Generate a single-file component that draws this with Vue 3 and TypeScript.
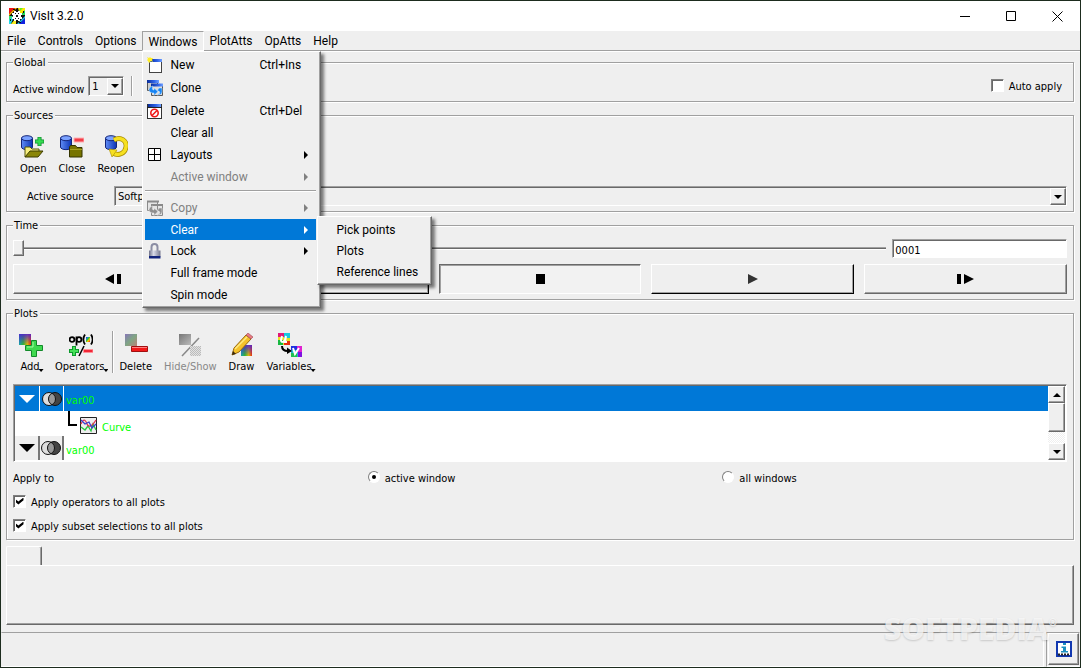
<script setup lang="ts">
import { ref } from 'vue'

const activeWindow = ref('1')
const source = ref('softp')
const frame = ref('0001')
const time = ref(0)
const autoApply = ref(false)
const applyTo = ref<'active' | 'all'>('active')
const operatorsToAll = ref(true)
const subsetsToAll = ref(true)
</script>

<template>
  <div class="window">
    <svg class="defs" aria-hidden="true">
      <defs>
        <linearGradient id="rain" x1="0" y1="0" x2="1" y2="1">
          <stop offset="0" stop-color="#3a10e0" />
          <stop offset=".25" stop-color="#1c8ccf" />
          <stop offset=".45" stop-color="#2fc52a" />
          <stop offset=".65" stop-color="#f0d000" />
          <stop offset="1" stop-color="#f01808" />
        </linearGradient>
        <linearGradient id="hue" x1="0" y1="0" x2="1" y2="0">
          <stop offset="0" stop-color="#10a8b0" />
          <stop offset=".35" stop-color="#30b830" />
          <stop offset=".7" stop-color="#e0c000" />
          <stop offset="1" stop-color="#f02808" />
        </linearGradient>
        <linearGradient id="shade" x1="0" y1="0" x2="0" y2="1">
          <stop offset="0" stop-color="#5020d0" stop-opacity=".9" />
          <stop offset="1" stop-color="#5020d0" stop-opacity="0" />
        </linearGradient>
        <linearGradient id="dull" x1="0" y1="0" x2="1" y2="1">
          <stop offset="0" stop-color="#8876b8" />
          <stop offset=".5" stop-color="#7fa584" />
          <stop offset="1" stop-color="#b98276" />
        </linearGradient>
        <linearGradient id="gray" x1="0" y1="0" x2="1" y2="1">
          <stop offset="0" stop-color="#777" />
          <stop offset="1" stop-color="#bbb" />
        </linearGradient>
        <linearGradient id="drum" x1="0" y1="0" x2="1" y2="0">
          <stop offset="0" stop-color="#5f8cf5" />
          <stop offset="1" stop-color="#0c33b4" />
        </linearGradient>
        <linearGradient id="bar" x1="0" y1="0" x2="1" y2="0">
          <stop offset="0" stop-color="#0a2e9a" />
          <stop offset=".6" stop-color="#2d62e8" />
          <stop offset="1" stop-color="#6fa0ff" />
        </linearGradient>
        <linearGradient id="steel" x1="0" y1="0" x2="1" y2="0">
          <stop offset="0" stop-color="#6d7088" />
          <stop offset=".4" stop-color="#d8dae8" />
          <stop offset="1" stop-color="#74778e" />
        </linearGradient>
      </defs>
    </svg>

    <header class="titlebar">
      <svg class="logo" width="16" height="16" viewBox="0 0 16 16" aria-hidden="true">
        <rect width="16" height="16" fill="#111" />
        <path d="M0 0h6L0 6z" fill="#f01010" /><path d="M6 0h2L0 8V6z" fill="#ffb000" />
        <path d="M9 0h7v3L11 7z" fill="#ffe800" /><path d="M16 2v5h-4z" fill="#20e060" /><path d="M11 0h3l-4 4z" fill="#60f020" />
        <path d="M0 10l5-2-3 8H0z" fill="#20d8e8" /><path d="M2 16l5-6v6z" fill="#f8f020" /><path d="M0 8h4l-4 4z" fill="#30e070" />
        <path d="M10 16l6-6v6z" fill="#1020e0" /><path d="M8 16l8-8v2l-6 6z" fill="#20c0f0" />
        <path d="M5 3h2v1h2V3h2v2h2v2h-1v2h1v2h-2v2H9v-1H7v1H5v-2H3V9h1V7H3V5h2z" fill="#fff" />
        <path d="M6 5h1v1H6zM9 5h1v1H9zM6 10h1v1H6zM9 10h1v1H9zM7 7h2v2H7zM4 1h2v1H4zM10 14h2v1h-2zM14 3h1v2h-1zM1 11h1v2H1z" fill="#111" />
      </svg>
      <h1>VisIt 3.2.0</h1>
      <div class="caption">
        <button aria-label="Minimize"><svg width="11" height="11" viewBox="0 0 11 11"><path d="M0 5.5h10" /></svg></button>
        <button aria-label="Maximize"><svg width="11" height="11" viewBox="0 0 11 11"><path d="M.5.5h9v9h-9z" /></svg></button>
        <button aria-label="Close window"><svg width="11" height="11" viewBox="0 0 11 11"><path d="M.5.5l10 10M10.500.5l-10 10" /></svg></button>
      </div>
    </header>

    <nav class="menubar">
      <button>File</button>
      <button>Controls</button>
      <button>Options</button>
      <div class="menu-host">
        <button class="open" aria-haspopup="menu" aria-expanded="true">Windows</button>
        <div class="menu main-menu" role="menu">
          <button class="item tall" role="menuitem">
            <svg width="16" height="16" viewBox="0 0 16 16"><rect x="2.500" y="3.500" width="12" height="12" fill="#fff" stroke="#444" /><rect x="3" y="2" width="12" height="3" fill="url(#bar)" /><path d="M0 0l2 1 1-1 1 1 2 0-1 2 1 2-2-1-2 2-1-2-1-1 1-1z" fill="#ffee20" /></svg>
            <span>New</span><kbd>Ctrl+Ins</kbd>
          </button>
          <button class="item tall" role="menuitem">
            <svg width="16" height="16" viewBox="0 0 16 16"><path d="M.5 1.500h10v9H.5z" fill="#ccc" stroke="#555" /><path d="M0 0h12v3H0z" fill="url(#bar)" /><path d="M4.500 5.500h11v10h-11z" fill="#ddd" stroke="#555" /><path d="M4 3.500h12v3H4z" fill="url(#bar)" /><path d="M6 6c-4 1-5 4-3 6 1 1 3 1 4 1v2.500l4-4-4-3.500v2c-2 0-2-2-1-4zM15 8v4c0 2-2 3-5 3l3-2-1-2h-2l2-3z" fill="#1684f4" stroke="#cfe6ff" stroke-width=".5" /></svg>
            <span>Clone</span>
          </button>
          <button class="item tall" role="menuitem">
            <svg width="16" height="16" viewBox="0 0 16 16"><rect x=".5" y="1.500" width="14" height="14" fill="#fff" stroke="#333" /><rect x="1" y="1" width="13" height="3" fill="url(#bar)" /><path d="M0 4.500h15" stroke="#222" /><circle cx="7.500" cy="10" r="3.700" fill="none" stroke="#f01818" stroke-width="1.600" /><path d="M5 12.500l5-5" stroke="#f01818" stroke-width="1.600" /></svg>
            <span>Delete</span><kbd>Ctrl+Del</kbd>
          </button>
          <button class="item" role="menuitem"><span>Clear all</span></button>
          <button class="item" role="menuitem">
            <svg width="16" height="16" viewBox="0 0 16 16"><path d="M1.500 1.500h12v12h-12zM7.500 1v13M1 7.500h13" fill="#fff" stroke="#000" /></svg>
            <span>Layouts</span><i class="arrow"></i>
          </button>
          <button class="item" role="menuitem" disabled><span>Active window</span><i class="arrow"></i></button>
          <hr>
          <button class="item" role="menuitem" disabled>
            <svg width="16" height="16" viewBox="0 0 16 16"><path d="M.5 1.500h10v9H.5zM4.500 5.500h11v10h-11z" fill="#e4e4e4" stroke="#8a8a8a" /><path d="M0 1.500h12M4 5h12" stroke="#8a8a8a" stroke-width="2" /><path d="M6 6c-4 1-5 4-3 6 1 1 3 1 4 1v2.500l4-4-4-3.500v2c-2 0-2-2-1-4zM15 8v4c0 2-2 3-5 3l3-2-1-2h-2l2-3z" fill="#8f8f8f" stroke="#eee" stroke-width=".5" /></svg>
            <span>Copy</span><i class="arrow"></i>
          </button>
          <div class="menu-host">
            <button class="item current" role="menuitem" aria-haspopup="menu" aria-expanded="true"><span>Clear</span><i class="arrow"></i></button>
            <div class="menu sub-menu" role="menu">
              <button class="item" role="menuitem"><span>Pick points</span></button>
              <button class="item" role="menuitem"><span>Plots</span></button>
              <button class="item" role="menuitem"><span>Reference lines</span></button>
            </div>
          </div>
          <button class="item" role="menuitem">
            <svg width="16" height="16" viewBox="0 0 16 16"><path d="M4.500 9V4c0-4 6-4 6 0v5" fill="none" stroke="#8b8da3" stroke-width="2" /><path d="M2 7.500h11.500v6H2z" fill="url(#steel)" /><path d="M2 13h11.500v2.500H2z" fill="#12247c" /></svg>
            <span>Lock</span><i class="arrow"></i>
          </button>
          <button class="item" role="menuitem"><span>Full frame mode</span></button>
          <button class="item" role="menuitem"><span>Spin mode</span></button>
        </div>
      </div>
      <button>PlotAtts</button>
      <button>OpAtts</button>
      <button>Help</button>
    </nav>

    <main>
      <fieldset>
        <legend>Global</legend>
        <div class="global-row">
          <label class="low" for="aw">Active window</label>
          <div class="combo small">
            <select id="aw" v-model="activeWindow"><option>1</option></select>
            <span class="drop" aria-hidden="true"></span>
          </div>
          <span class="vline"></span>
          <label class="check auto"><input v-model="autoApply" type="checkbox"><span>Auto apply</span></label>
        </div>
      </fieldset>

      <fieldset>
        <legend>Sources</legend>
        <div class="toolbar sources">
          <button>
            <svg width="24" height="24" viewBox="0 0 24 24"><path d="M.5 3v9c0 3.500 11 3.500 11 0V3z" fill="url(#drum)" stroke="#14267a" /><ellipse cx="6" cy="3.200" rx="5.500" ry="2.500" fill="#7ba2ff" stroke="#14267a" /><path d="M4 22V12h5l2 2h7v3" fill="#f8f080" stroke="#55550a" /><path d="M4 22l5-6h13l-5 6z" fill="#8a8608" stroke="#3c3c00" /><path d="M18.500 2v9M14 6.500h9" stroke="#0c8a2c" stroke-width="4" /><path d="M18.500 2.500v8M14.500 6.500h8" stroke="#35dc50" stroke-width="2.500" /></svg>
            <span>Open</span>
          </button>
          <button>
            <svg width="24" height="24" viewBox="0 0 24 24"><path d="M.5 3v9c0 3.500 11 3.500 11 0V3z" fill="url(#drum)" stroke="#14267a" /><ellipse cx="6" cy="3.200" rx="5.500" ry="2.500" fill="#7ba2ff" stroke="#14267a" /><path d="M9.500 22V12l1-1.500h5l1.500 2h5V22z" fill="#777400" stroke="#353500" /><path d="M10 14.500h12" stroke="#a5a120" /><path d="M14 3h10v4H14z" fill="#f23e48" stroke="#ffb0b4" /></svg>
            <span>Close</span>
          </button>
          <button>
            <svg width="24" height="24" viewBox="0 0 24 24"><path d="M1.500 3v9c0 3.500 11 3.500 11 0V3z" fill="url(#drum)" stroke="#14267a" /><ellipse cx="7" cy="3.200" rx="5.500" ry="2.500" fill="#7ba2ff" stroke="#14267a" /><path d="M10 5c7-4 13 1 12 7-1 7-8 9-13 6" fill="none" stroke="#a88c00" stroke-width="5" /><path d="M10 5c7-4 13 1 12 7-1 7-8 9-13 6" fill="none" stroke="#f6e020" stroke-width="3.500" /><path d="M5 14l8 1-5 7z" fill="#f6e020" stroke="#a88c00" stroke-width=".6" /></svg>
            <span>Reopen</span>
          </button>
        </div>
        <div class="source-row">
          <label for="src">Active source</label>
          <div class="combo">
            <select id="src" v-model="source"><option value="softp">Softp</option></select>
            <span class="drop" aria-hidden="true"></span>
          </div>
        </div>
      </fieldset>

      <fieldset>
        <legend>Time</legend>
        <div class="time-row">
          <input v-model="time" class="slider" type="range" min="0" max="100" aria-label="Time slider">
          <input v-model="frame" class="field" type="text" aria-label="Time state">
        </div>
        <div class="player">
          <button aria-label="Step back"><svg width="18" height="10" viewBox="0 0 18 10"><path d="M9 0v10L0 5zM12 0h4v10h-4z" /></svg></button>
          <button class="strong" aria-label="Play reverse"><svg width="18" height="10" viewBox="0 0 18 10"><path d="M14 0v10L4 5z" /></svg></button>
          <button class="down" aria-label="Stop"><svg width="18" height="10" viewBox="0 0 18 10"><path d="M5 0h9v10H5z" /></svg></button>
          <button class="strong" aria-label="Play"><svg width="18" height="10" viewBox="0 0 18 10"><path d="M4 0v10l10-5z" fill="#333" /></svg></button>
          <button aria-label="Step forward"><svg width="18" height="10" viewBox="0 0 18 10"><path d="M7 0v10l10-5zM0 0h4v10H0z" /></svg></button>
        </div>
      </fieldset>

      <fieldset>
        <legend>Plots</legend>
        <div class="toolbar">
          <button>
            <svg width="24" height="24" viewBox="0 0 24 24"><path d="M0 1h12v11H0z" fill="url(#hue)" /><path d="M0 1h12v11H0z" fill="url(#shade)" /><path d="M12.500 7.500h5v5h6v5h-6v6h-5v-6h-6v-5h6z" fill="#3fd94f" stroke="#128a2a" /><path d="M14 9v5H8" fill="none" stroke="#a0ffa0" /></svg>
            <span>Add<i class="tick"></i></span>
          </button>
          <button>
            <svg width="24" height="24" viewBox="0 0 24 24"><g fill="none" stroke="#000" stroke-width="1.800"><circle cx="3" cy="6.500" r="2.400" /><path d="M7.500 3.500v9" /><circle cx="10" cy="6.500" r="2.400" /><path d="M16 1.500c-2 3-2 7 0 10M22 1.500c2 3 2 7 0 10" /></g><path d="M17 4h4v5h-4z" fill="url(#rain)" /><path d="M5 13v10M0 18h10" stroke="#0c9a2c" stroke-width="4" /><path d="M5 14v8M1 18h8" stroke="#46e058" stroke-width="2" /><path d="M10 23l5-10" stroke="#000" stroke-width="1.600" /><path d="M14.500 16.500H24v3h-9.500z" fill="#f02838" stroke="#ff9098" /></svg>
            <span>Operators<i class="tick"></i></span>
          </button>
          <span class="vline"></span>
          <button>
            <svg width="24" height="24" viewBox="0 0 24 24"><path d="M1 1h12v12H1z" fill="url(#dull)" /><path d="M7.500 13.500h16v5h-16z" fill="#f31818" stroke="#a01010" /><path d="M8 14.500h15" stroke="#ff8080" /></svg>
            <span>Delete</span>
          </button>
          <button disabled>
            <svg width="24" height="24" viewBox="0 0 24 24"><path d="M1 1h12v11H1z" fill="url(#gray)" /><path d="M4 23L21 5" stroke="#888" stroke-width="1.500" /><path d="M12 13h11v10H12z" fill="#e2e2e2" /><path d="M12 13.500h11M12 15.500h11M12 17.500h11M12 19.500h11M12 21.500h11" stroke="#bbb" stroke-dasharray="1 1" /><path d="M13 14.500h10M13 16.500h10M13 18.500h10M13 20.500h10M13 22.500h10" stroke="#bbb" stroke-dasharray="1 1" /></svg>
            <span>Hide/Show</span>
          </button>
          <button>
            <svg width="24" height="24" viewBox="0 0 24 24"><path d="M11 12h11v11H11z" fill="url(#hue)" /><path d="M11 12h11v11H11z" fill="url(#shade)" /><path d="M2 22l2-7L16 2l5 4L9 19z" fill="#f5c22a" stroke="#9a6a10" /><path d="M5 16L17 4" stroke="#ffe980" stroke-width="1.500" /><path d="M16 2l2-2 5 4-2 2z" fill="#e87a84" stroke="#a04850" stroke-width=".6" /><path d="M2 22l1-4 3 3z" fill="#3a2a10" /></svg>
            <span>Draw</span>
          </button>
          <button>
            <svg width="24" height="24" viewBox="0 0 24 24"><path d="M0 0h12v12H0z" fill="#e8e020" /><path d="M0 0h6v4H0z" fill="#e01878" /><path d="M6 0h6v5H6z" fill="#18c8e0" /><path d="M0 7h5v5H0z" fill="#18b840" /><path d="M6 8h6v4H6z" fill="#e83010" /><path d="M4 3L3 7c0 3 3 2 4 0l1-4M8 3L7 9h2" fill="none" stroke="#fff" stroke-width="2" /><path d="M13 13h11v11H13z" fill="#20b8d0" /><path d="M13 13h6v4h-6z" fill="#2030e0" /><path d="M19 13h5v6h-5z" fill="#e020d0" /><path d="M13 20h6v4h-6z" fill="#20c050" /><path d="M20 19h4v5h-4z" fill="#8010e0" /><path d="M15 15l2 6 4-6" fill="none" stroke="#fff" stroke-width="2" /><path d="M4 13c0 4 3 5 6 5" fill="none" stroke="#000" stroke-width="2" /><path d="M9 14.500l5 3.500-5 3z" /></svg>
            <span>Variables<i class="tick"></i></span>
          </button>
        </div>

        <div class="plot-list">
          <ul>
            <li class="selected">
              <button class="cell" aria-label="Collapse plot"><i class="fold"></i></button>
              <span class="cell"><svg width="20" height="16" viewBox="0 0 20 16"><circle cx="7" cy="8" r="6.500" fill="#ddd" /><circle cx="13" cy="8" r="6.500" fill="#444" /><path d="M10 2.200a6.500 6.500 0 0 1 0 11.600a6.500 6.500 0 0 1 0-11.600z" fill="#999" /><g fill="none" stroke="#111"><circle cx="7" cy="8" r="6.500" /><circle cx="13" cy="8" r="6.500" /></g></svg></span>
              <span class="name">var00</span>
            </li>
            <li class="child">
              <i class="elbow"></i>
              <svg width="17" height="17" viewBox="0 0 17 17"><path d="M.5.5h16v16H.5z" fill="#eee" stroke="#222" /><g fill="none" stroke-width="1.300"><path d="M1 10l4 3 3-4 3 5 2-7 3 6" stroke="#28c840" /><path d="M1 7c3-7 5-3 6 0s4 4 9-4" stroke="#e03050" /><path d="M1 3l4 4 4-2 3 6 4-4" stroke="#3840d0" /></g></svg>
              <span class="name">Curve</span>
            </li>
            <li>
              <button class="cell" aria-label="Collapse plot"><i class="fold"></i></button>
              <span class="cell"><svg width="20" height="16" viewBox="0 0 20 16"><circle cx="7" cy="8" r="6.500" fill="#ddd" /><circle cx="13" cy="8" r="6.500" fill="#444" /><path d="M10 2.200a6.500 6.500 0 0 1 0 11.600a6.500 6.500 0 0 1 0-11.600z" fill="#999" /><g fill="none" stroke="#111"><circle cx="7" cy="8" r="6.500" /><circle cx="13" cy="8" r="6.500" /></g></svg></span>
              <span class="name">var00</span>
            </li>
          </ul>
          <div class="scroll">
            <button aria-label="Scroll up"><i class="up"></i></button>
            <span class="thumb"></span>
            <span class="track"></span>
            <button aria-label="Scroll down"><i class="dn"></i></button>
          </div>
        </div>

        <div class="apply-row" role="radiogroup" aria-labelledby="apply-to">
          <span id="apply-to">Apply to</span>
          <label class="check"><input v-model="applyTo" type="radio" name="apply" value="active"><span>active window</span></label>
          <label class="check"><input v-model="applyTo" type="radio" name="apply" value="all"><span>all windows</span></label>
        </div>
        <label class="check line"><input v-model="operatorsToAll" type="checkbox"><span>Apply operators to all plots</span></label>
        <label class="check line"><input v-model="subsetsToAll" type="checkbox"><span>Apply subset selections to all plots</span></label>
      </fieldset>

      <section class="tabs">
        <button class="tab" role="tab" aria-label="Notepad tab"></button>
        <div class="panel"></div>
      </section>
    </main>

    <footer>
      <div class="status"></div>
      <div class="output">
        <button aria-label="Output window">
          <svg width="16" height="16" viewBox="0 0 16 16"><path d="M1 1h14v14H1z" fill="#fff" stroke="#1238b0" stroke-width="2" /><path d="M7 2h3v2H7zM5.500 5.500H10V10h2v1.500H5V10h2V7H5.500z" fill="#1b8fc0" /><path d="M2 13.500h12" stroke="#222" stroke-width="2" stroke-dasharray="2 1" /></svg>
        </button>
      </div>
      <div class="watermark">SOFTPEDIA<sup>®</sup></div>
    </footer>
  </div>
</template>

<style>
html, body { margin: 0; background: #efefef; }
</style>

<style scoped>
* { box-sizing: border-box; }
.window {
  position: relative;
  min-height: 100vh;
  display: flex;
  flex-direction: column;
  border: 1px solid #1d2c1e;
  background: #efefef;
  color: #000;
  font: 11px/13px "DejaVu Sans Condensed", "Liberation Sans", sans-serif;
  overflow: hidden;
}
.defs { position: absolute; width: 0; height: 0; }
button, input, select { font: inherit; color: inherit; margin: 0; }
button { padding: 0; border: 0; background: none; }
svg { display: block; flex: none; }

.titlebar { display: flex; align-items: center; height: 30px; padding-left: 8px; background: #fff; }
.titlebar h1 { flex: 1; margin: 0 0 0 5px; font: 400 12px/16px Roboto, "Liberation Sans", sans-serif; }
.caption { display: flex; align-self: stretch; }
.caption button { display: grid; place-items: center; width: 46px; }
.caption path { fill: none; stroke: #000; }

.menubar {
  display: flex;
  height: 21px;
  border-bottom: 1px solid #fff;
  box-shadow: inset 0 -1px #a0a0a0;
  font: 12px/18px Roboto, "Liberation Sans", sans-serif;
}
.menubar > button, .open { height: 20px; padding: 0 6px; }
.menu-host { position: relative; z-index: 2; }
.open { display: block; padding: 1px 5px 0; border: 1px solid; border-color: #a0a0a0 #fff #fff #a0a0a0; }
.menu {
  position: absolute;
  display: flex;
  flex-direction: column;
  background: #efefef;
  border: 1px solid;
  border-color: #fff #696969 #696969 #fff;
  box-shadow: inset -1px -1px #a0a0a0, 3px 3px 3px rgba(0, 0, 0, .5);
}
.main-menu { top: 20px; left: 0; width: 179px; padding: 1px 4px 1px 2px; }
.item {
  display: grid;
  grid-template-columns: 16px 1fr auto;
  column-gap: 7px;
  align-items: center;
  width: 100%;
  height: 22px;
  padding: 0 8px 0 2px;
  text-align: left;
}
.item.tall { height: 23px; padding-right: 13px; }
.item > svg { grid-column: 1; }
.item > span { grid-column: 2; white-space: nowrap; }
.item kbd { width: 44px; font: inherit; }
.item:disabled { color: #808080; }
.item.current { background: #0078d7; color: #fff; height: 21px; }
.arrow { border: solid transparent; border-width: 4px 0 4px 4px; border-left-color: currentColor; }
.menu hr { width: 100%; height: 2px; margin: 2px 0 5px; border: 0; border-top: 1px solid #a0a0a0; border-bottom: 1px solid #fff; }
.sub-menu { top: -3px; left: 172px; width: 115px; padding: 2px 1px; }
.sub-menu .item { grid-template-columns: 1fr; height: 21px; padding: 0 0 0 17px; }
.sub-menu .item > span { grid-column: 1; }

main { flex: 1; display: flex; flex-direction: column; padding: 4px 6px 7px 5px; gap: 6px; }
fieldset {
  min-width: 0;
  margin: 0;
  padding: 0 6px 5px;
  border: 1px solid #a0a0a0;
  box-shadow: inset 1px 1px #fff, 1px 1px #fff;
}
fieldset + fieldset { margin-top: 1px; }
legend { height: 13px; padding: 0 2px 0 1px; background: #efefef; }
.vline { width: 2px; border-left: 1px solid #a0a0a0; border-right: 1px solid #fff; }

.global-row { display: flex; align-items: center; height: 27px; padding-top: 6px; }
.global-row .low { padding-top: 8px; }
.global-row .combo { margin-left: 4px; }
.global-row .vline { height: 20px; margin-left: 7px; }
.global-row .auto { margin-left: auto; margin-right: 5px; padding-top: 2px; }

.combo {
  display: grid;
  height: 20px;
  border: 1px solid;
  border-color: #a0a0a0 #fff #fff #a0a0a0;
  box-shadow: inset 1px 1px #696969;
}
.combo.small { width: 36px; }
.combo select, .combo .drop { grid-area: 1 / 1; }
.combo select { appearance: none; width: 100%; padding: 1px 18px 0 3px; border: 0; border-radius: 0; background: none; outline: 0; }
.drop {
  justify-self: end;
  display: grid;
  place-items: center;
  width: 16px;
  margin: 1px 0 0;
  background: #efefef;
  border: 1px solid;
  border-color: #fff #696969 #696969 #fff;
  box-shadow: inset -1px -1px #a0a0a0;
  pointer-events: none;
}
.drop::after, .dn, .fold { content: ""; border: solid transparent; border-width: 4px 4px 0; border-top-color: #000; }
.up { border: solid transparent; border-width: 0 4px 4px; border-bottom-color: #000; }

.toolbar { display: flex; padding: 13px 0 11px; }
.toolbar.sources { padding-left: 1px; }
.toolbar button { display: flex; flex-direction: column; align-items: center; gap: 3px; padding: 0 6px; }
.toolbar button > span { display: flex; align-items: flex-end; }
.toolbar button:disabled { color: #888; }
.toolbar .vline { margin: -2px -1px 0 0; }
.tick { width: 5px; height: 3px; margin: 0 -2px 1px -1px; background: #000; clip-path: polygon(0 0, 100% 0, 50% 100%); }

.source-row { display: grid; grid-template-columns: 101px 1fr; align-items: center; }
.source-row label { padding: 1px 0 0 14px; }

.time-row { display: grid; grid-template-columns: 5fr 1fr; gap: 6px; padding-top: 7px; }
.field {
  min-width: 0;
  width: 100%;
  height: 19px;
  padding: 3px 2px 0;
  background: #fff;
  border: 1px solid;
  border-color: #a0a0a0 #fff #fff #a0a0a0;
  box-shadow: inset 1px 1px #696969;
  border-radius: 0;
  outline: 0;
}
.slider { appearance: none; width: 100%; height: 19px; background: none; }
.slider::-webkit-slider-runnable-track { height: 3px; background: linear-gradient(#a0a0a0 1px, #696969 1px 2px, #fff 2px); }
.slider::-webkit-slider-thumb {
  appearance: none;
  width: 11px;
  height: 16px;
  margin-top: -7px;
  border: 1px solid;
  border-color: #fff #696969 #696969 #fff;
  box-shadow: inset -1px -1px #a0a0a0;
  border-radius: 0;
  background: #efefef;
}
.player { display: grid; grid-template-columns: repeat(5, 1fr); gap: 10px; padding-top: 6px; }
.player button, .scroll button, .thumb, .output button {
  display: grid;
  place-items: center;
  border: 1px solid;
  border-color: #fff #696969 #696969 #fff;
  box-shadow: inset -1px -1px #a0a0a0;
}
.player button { height: 30px; }
.player .strong { border-color: #fff #000 #000 #fff; }
.player .down { border-color: #696969 #fff #fff #696969; box-shadow: inset 1px 1px #a0a0a0; background: #f2f2f2; }

.plot-list {
  display: flex;
  border: 1px solid;
  border-color: #a0a0a0 #fff #fff #a0a0a0;
  box-shadow: inset 1px 1px #696969;
  padding: 1px;
  background: #fff;
}
.plot-list ul { flex: 1; margin: 0; padding: 0; list-style: none; }
.plot-list li { display: flex; height: 25px; align-items: stretch; color: #00ff00; }
.plot-list li:last-child { height: 24px; }
.cell { display: grid; place-items: center; width: 25px; border-right: 2px solid #777; background: #efefef; color: #000; }
.cell + .cell { width: 24px; }
.selected { background: #0078d7; }
.selected .cell { background: none; border-right: 1px solid #fff; }
.fold { border-width: 8px 8px 0; }
.selected .fold { border-top-color: #fff; }
.name { align-self: center; padding: 4px 0 0 2px; }
.child { padding-left: 53px; }
.elbow { width: 9px; height: 15px; margin-right: 3px; border: solid #000; border-width: 0 0 2px 2px; }
.child svg { margin-top: 6px; }
.child .name { padding: 8px 0 0 5px; }
.scroll { display: flex; flex-direction: column; width: 17px; background: #f8f8f8; }
.scroll button { height: 17px; background: #efefef; }
.thumb { height: 29px; background: #efefef; }
.track { flex: 1; background: repeating-conic-gradient(#efefef 0 25%, #fff 0 50%) 0 0 / 2px 2px; }

.apply-row { display: grid; grid-template-columns: repeat(3, 1fr); gap: 10px; align-items: center; height: 16px; margin-top: 8px; }
.check { display: flex; align-items: center; gap: 5px; }
.check.line { height: 16px; margin-top: 8px; }
.check input {
  appearance: none;
  display: grid;
  place-items: center;
  flex: none;
  width: 13px;
  height: 13px;
  margin: -2px 0 0;
  background: #fff;
  border: 1px solid;
  border-color: #808080 #fff #fff #808080;
  box-shadow: inset 1px 1px #696969;
}
.check input[type="radio"] { width: 12px; height: 12px; border-radius: 50%; box-shadow: none; }
.check input[type="radio"]:checked::after { content: ""; width: 4px; height: 4px; border-radius: 50%; background: #000; }
.check input[type="checkbox"]:checked::after {
  content: "";
  width: 8px;
  height: 7px;
  background: #000;
  clip-path: polygon(0 25%, 36% 58%, 100% 0, 100% 40%, 36% 100%, 0 66%);
}

.tabs { flex: 1; display: flex; flex-direction: column; }
.tab { width: 36px; height: 20px; margin-bottom: -1px; border: 1px solid; border-color: #fff #696969 transparent #fff; border-radius: 2px 2px 0 0; box-shadow: inset -1px 0 #a0a0a0; }
.panel { flex: 1; min-height: 40px; border: 1px solid; border-color: #fff #696969 #696969 #fff; box-shadow: inset -1px -1px #a0a0a0; }

footer { position: relative; display: flex; gap: 2px; height: 35px; }
.status { flex: 1; border: 1px solid; border-color: #a0a0a0 #fff #fff transparent; }
.output { border: 1px solid; border-color: #a0a0a0 transparent #fff #a0a0a0; padding: 0 0 0 1px; }
.output button { width: 31px; height: 32px; }
.watermark {
  position: absolute;
  right: 23px;
  top: -21px;
  font: 800 30px/36px "Open Sans", "Liberation Sans", sans-serif;
  color: rgba(250, 250, 250, .75);
  text-shadow: 0 1px 2px rgba(0, 0, 0, .16);
  pointer-events: none;
}
.watermark sup { font-size: 10px; line-height: 10px; vertical-align: 14px; }
</style>
